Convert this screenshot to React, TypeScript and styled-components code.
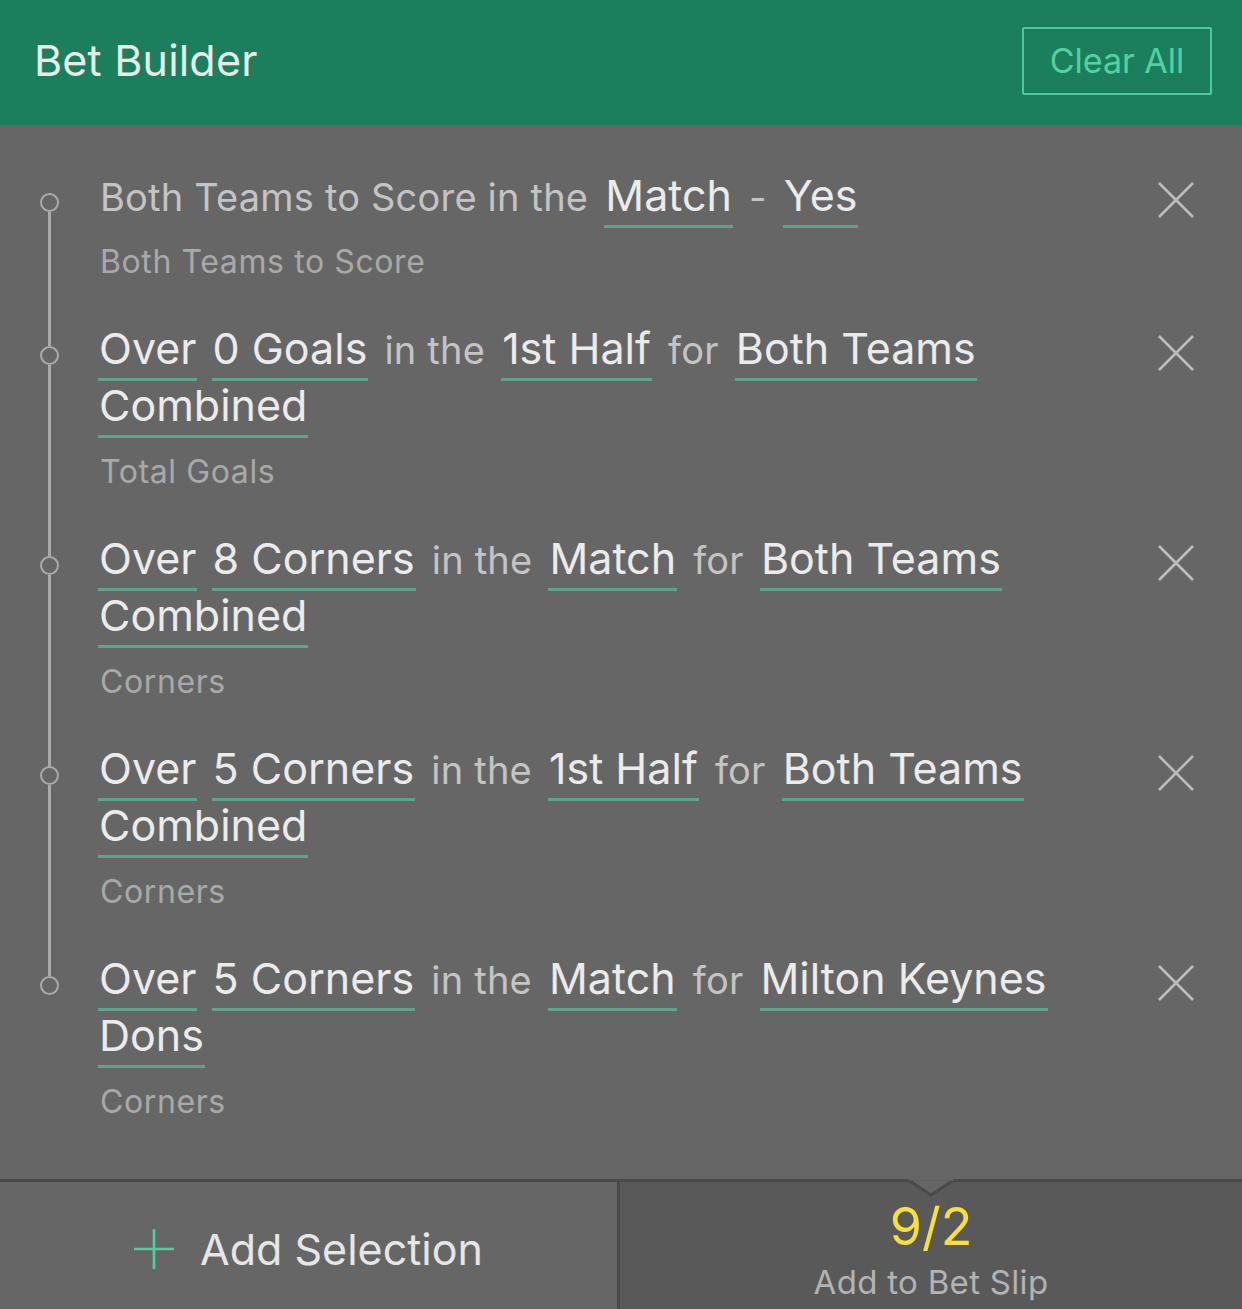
import React from "react";
import styled, { createGlobalStyle } from "styled-components";

const GlobalStyle = createGlobalStyle`
  html, body {
    margin: 0;
    padding: 0;
    background: #666666;
  }
  body {
    font-family: Inter, "Noto Sans", sans-serif;
    -webkit-font-smoothing: antialiased;
  }
`;

const Panel = styled.div`
  width: 1242px;
  height: 1309px;
  display: flex;
  flex-direction: column;
  background: #666666;
  overflow: hidden;
`;

const Header = styled.header`
  height: 125px;
  flex-shrink: 0;
  background: #1b7f5e;
  display: flex;
  align-items: center;
  justify-content: space-between;
  padding: 0 30px 6px 34px;
  box-sizing: border-box;
`;

const Title = styled.h1`
  margin: 0;
  font-size: 43px;
  font-weight: 400;
  color: #e8ece9;
  letter-spacing: 0.2px;
`;

const ClearButton = styled.button`
  width: 190px;
  height: 68px;
  margin-top: 2px;
  background: transparent;
  border: 2.5px solid #4fc99b;
  border-radius: 2px;
  color: #55d0a1;
  font-family: inherit;
  font-size: 34px;
  font-weight: 400;
  padding: 0;
`;

const List = styled.div`
  flex: 1;
  padding: 42px 0 0;
`;

const Row = styled.div`
  display: grid;
  grid-template-columns: 97px 1004px 1fr;
`;

const Marker = styled.div<{ $first?: boolean; $last?: boolean }>`
  display: flex;
  flex-direction: column;
  align-items: center;
  width: 20px;
  margin-left: 39px;

  &::before {
    content: "";
    width: 3px;
    height: 26px;
    background: ${(p) => (p.$first ? "transparent" : "#aaaaaa")};
  }
  &::after {
    content: "";
    width: 3px;
    flex: 1;
    background: ${(p) => (p.$last ? "transparent" : "#aaaaaa")};
  }
`;

const Dot = styled.span`
  width: 15px;
  height: 15px;
  border: 2.5px solid #aaaaaa;
  border-radius: 50%;
  flex-shrink: 0;
`;

const Body = styled.div`
  padding-bottom: 38px;
`;

const Line = styled.div`
  font-size: 43px;
  line-height: 57px;
  color: #ebebeb;
`;

const Pick = styled.span`
  color: #ebebeb;
  border-bottom: 3px solid #5ea38b;
  padding: 0 1px 4px;
  margin: 0 1px;
  -webkit-box-decoration-break: clone;
  box-decoration-break: clone;
`;

const Joiner = styled.span`
  font-size: 38px;
  line-height: 1;
  color: #c4c4c4;
  margin: 0 3px;
  letter-spacing: 0.2px;

  &:first-child {
    margin-left: 3px;
  }
`;

const Market = styled.div`
  margin-top: 18px;
  padding-left: 3px;
  font-size: 32px;
  line-height: 40px;
  color: #a9a9a9;
  letter-spacing: 0.6px;
`;

const Close = styled.button`
  width: 36px;
  height: 36px;
  margin: 15px 0 0 57px;
  padding: 0;
  border: 0;
  background: transparent;
  display: block;
`;

const Footer = styled.footer`
  height: 130px;
  flex-shrink: 0;
  border-top: 3px solid #4a4a4a;
  display: grid;
  grid-template-columns: 620px 1fr;
  box-sizing: border-box;
`;

const AddSelection = styled.button`
  background: #666666;
  border: 0;
  border-right: 3px solid #4a4a4a;
  display: flex;
  align-items: center;
  justify-content: center;
  gap: 26px;
  padding: 6px 0 0;
  font-family: inherit;
  font-size: 43px;
  color: #e6e6e6;
`;

const AddSlip = styled.button`
  position: relative;
  background: #595959;
  border: 0;
  display: flex;
  flex-direction: column;
  align-items: center;
  padding: 16px 0 0 0;
  font-family: inherit;
`;

const Notch = styled.svg`
  position: absolute;
  top: -3px;
  left: 50%;
  transform: translateX(-50%);
`;

const Odds = styled.span`
  font-size: 52px;
  line-height: 58px;
  color: #f7e03a;
`;

const SlipLabel = styled.span`
  font-size: 33px;
  line-height: 40px;
  color: #b3b3b3;
  margin-top: 6px;
  letter-spacing: 0.3px;
`;

type Part = { t: string; pick?: boolean };

const p = (t: string): Part => ({ t, pick: true });
const j = (t: string): Part => ({ t });

const selections: { parts: Part[]; market: string }[] = [
  {
    parts: [j("Both Teams to Score in the"), p("Match"), j("-"), p("Yes")],
    market: "Both Teams to Score",
  },
  {
    parts: [p("Over"), p("0 Goals"), j("in the"), p("1st Half"), j("for"), p("Both Teams Combined")],
    market: "Total Goals",
  },
  {
    parts: [p("Over"), p("8 Corners"), j("in the"), p("Match"), j("for"), p("Both Teams Combined")],
    market: "Corners",
  },
  {
    parts: [p("Over"), p("5 Corners"), j("in the"), p("1st Half"), j("for"), p("Both Teams Combined")],
    market: "Corners",
  },
  {
    parts: [p("Over"), p("5 Corners"), j("in the"), p("Match"), j("for"), p("Milton Keynes Dons")],
    market: "Corners",
  },
];

function CrossIcon() {
  return (
    <svg width="36" height="36" viewBox="0 0 36 36">
      <path d="M1 1 L35 35 M35 1 L1 35" stroke="#bdbdbd" strokeWidth="2.6" fill="none" />
    </svg>
  );
}

function PlusIcon() {
  return (
    <svg width="40" height="40" viewBox="0 0 40 40">
      <path d="M20 0 V40 M0 20 H40" stroke="#4fcf9e" strokeWidth="2.6" fill="none" />
    </svg>
  );
}

export default function App() {
  return (
    <Panel>
      <GlobalStyle />
      <Header>
        <Title>Bet Builder</Title>
        <ClearButton>Clear All</ClearButton>
      </Header>
      <List>
        {selections.map((s, i) => (
          <Row key={i}>
            <Marker $first={i === 0} $last={i === selections.length - 1}>
              <Dot />
            </Marker>
            <Body>
              <Line>
                {s.parts.map((part, k) => (
                  <React.Fragment key={k}>
                    {k > 0 && " "}
                    {part.pick ? <Pick>{part.t}</Pick> : <Joiner>{part.t}</Joiner>}
                  </React.Fragment>
                ))}
              </Line>
              <Market>{s.market}</Market>
            </Body>
            <div>
              <Close aria-label="Remove">
                <CrossIcon />
              </Close>
            </div>
          </Row>
        ))}
      </List>
      <Footer>
        <AddSelection>
          <PlusIcon />
          Add Selection
        </AddSelection>
        <AddSlip>
          <Notch width="44" height="18" viewBox="0 0 44 18">
            <path d="M0 1.5 L22 16 L44 1.5" fill="#666666" stroke="#4a4a4a" strokeWidth="3" />
            <rect x="0" y="0" width="44" height="1.5" fill="#666666" />
          </Notch>
          <Odds>9/2</Odds>
          <SlipLabel>Add to Bet Slip</SlipLabel>
        </AddSlip>
      </Footer>
    </Panel>
  );
}
